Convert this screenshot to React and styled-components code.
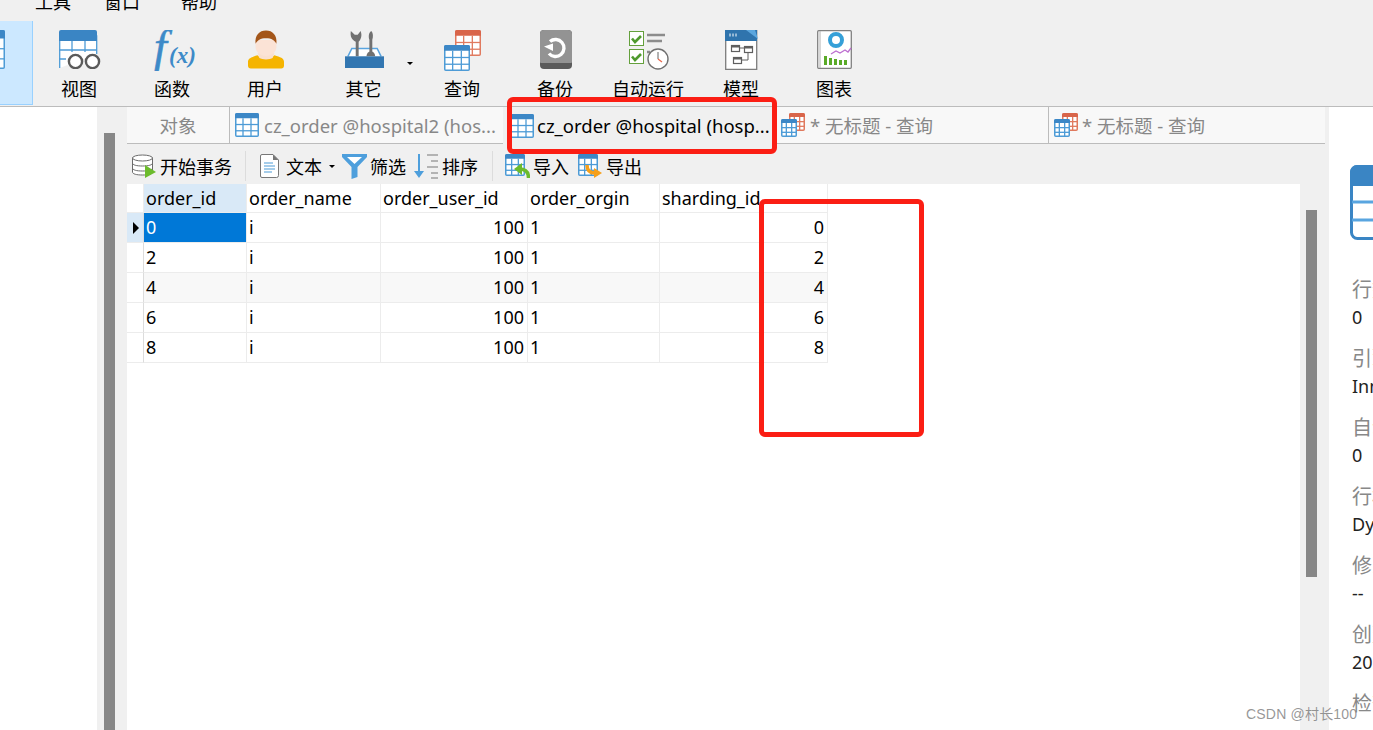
import React from 'react';
import styled, { createGlobalStyle } from 'styled-components';

const Global = createGlobalStyle`
  html, body { margin: 0; padding: 0; background: #fff; height: 730px; overflow: hidden; }
  #root { height: 730px; }
  * { box-sizing: border-box; }
`;
const FONT = `"Noto Sans", "Noto Sans CJK SC", sans-serif`;

const Page = styled.div`
  position: relative; width: 1373px; height: 730px; overflow: hidden;
  display: flex; flex-direction: column; font-family: ${FONT}; font-size: 18px; color: #000;
`;
const Top = styled.header`
  flex: none; height: 107px; background: #f0f0f0; border-bottom: 1px solid #bcbcbc;
  display: flex; flex-direction: column;
`;
const MenuBar = styled.nav`
  height: 21px; flex: none; overflow: hidden; display: flex; align-items: flex-end;
  padding: 0 0 7px 35px; font-size: 18px; line-height: 24px; gap: 33px;
`;
const MenuItem = styled.span`
  flex: none; width: ${p => p.$w}px; white-space: nowrap;
`;
const RibbonRow = styled.div`display: flex; height: 85px;`;
const RibbonBtn = styled.div`
  position: relative; flex: none; width: ${p => p.$w || 93}px; height: 84px;
  display: flex; flex-direction: column; align-items: center; padding-top: 9px;
  overflow: hidden;
  ${p => p.$active && `background: #cce8ff; border-right: 1px solid #99d1ff; border-bottom: 1px solid #99d1ff;`}
`;
const RibbonIcon = styled.div`height: 40px; width: 50px; display: flex; justify-content: center; align-items: flex-start; flex: none;`;
const RibbonText = styled.div`margin-top: 7px; font-size: 18px; line-height: 24px; white-space: nowrap; transform: translateX(-.5px);`;
const DropArrow = styled.span`
  position: absolute; left: ${p => p.$x}px; top: ${p => p.$y}px; width: 0; height: 0;
  border-left: 3px solid transparent; border-right: 3px solid transparent; border-top: 3px solid #000;
`;

const Body = styled.div`flex: 1; display: flex; min-height: 0;`;
const LeftPane = styled.aside`flex: none; width: 97px; background: #fff;`;
const LeftGutter = styled.div`flex: none; width: 30px; background: #f0f0f0; padding: 26px 12px 0 7px;`;
const ScrollThumb = styled.div`
  width: 11px; height: ${p => p.$h}; background: #878787;
`;
const Center = styled.main`flex: none; width: 1202px; display: flex; flex-direction: column; background: #f0f0f0;`;
const Tabs = styled.div`
  flex: none; width: 1198px; height: 37px; display: flex; background: #f8f8f8;
  border-bottom: 1px solid #bcbcbc;
`;
const Tab = styled.div`
  flex: none; width: ${p => p.$w}px; height: ${p => p.$active ? 37 : 36}px; display: flex; align-items: center; gap: ${p => p.$gap ?? 5}px;
  padding: 0 0 0 ${p => p.$pad ?? 5}px; white-space: nowrap; overflow: hidden; font-size: 18.5px;
  color: ${p => p.$active ? '#000' : '#888'};
  background: ${p => p.$active ? '#f0f0f0' : 'transparent'};
  justify-content: ${p => p.$center ? 'center' : 'flex-start'};
  ${p => p.$sep && 'border-left: 1px solid #bcbcbc;'}
`;
const ToolBar = styled.div`
  flex: none; height: 40px; display: flex; align-items: center; padding: 4px 0 0 5px;
  font-size: 18px;
`;
const ToolBtn = styled.div`
  flex: none; display: flex; align-items: center; gap: ${p => p.$gap ?? 3}px; margin-left: ${p => p.$ml || 0}px; white-space: nowrap;
`;
const ToolSep = styled.div`flex: none; width: 1px; height: 30px; background: #dcdcdc; margin-left: ${p => p.$ml}px;`;
const ToolArrow = styled.span`
  width: 0; height: 0;
  border-left: 3px solid transparent; border-right: 3px solid transparent; border-top: 3px solid #000;
`;
const Content = styled.div`flex: 1; display: flex; min-height: 0;`;
const DataArea = styled.section`flex: none; width: 1173px; background: #fff;`;
const DataGrid = styled.div`
  display: grid; width: 701px;
  grid-template-columns: 17px 103px 134px 147px 132px 168px;
  grid-template-rows: 29px;
  grid-auto-rows: 30px;
  font-size: 18px;
`;
const Cell = styled.div`
  padding: 0 3px 2px 2px; display: flex; align-items: center; white-space: nowrap;
  border-right: 1px solid #ececec; border-bottom: 1px solid #ececec; margin: 0;
  justify-content: ${p => p.$right ? 'flex-end' : 'flex-start'};
  background: ${p => p.$sel ? '#0078d7' : p.$head ? '#d9e9f7' : p.$alt ? '#f8f8f8' : '#fff'};
  color: ${p => p.$sel ? '#fff' : '#000'};
`;
const HeadCell = styled(Cell)`padding-bottom: 0;`;
const Marker = styled(Cell)`
  padding: 0 0 0 6px;
  border-right-color: #dcdcdc;
`;
const MarkerArrow = styled.span`
  width: 0; height: 0; border-top: 6px solid transparent; border-bottom: 6px solid transparent; border-left: 6px solid #000;
`;
const RightGutter = styled.div`flex: none; width: 29px; padding: 26px 0 0 6px; background: #f0f0f0;`;
const RightPane = styled.aside`flex: none; width: 44px; background: #fff; overflow: hidden; padding: 58px 0 0 23px;`;
const InfoIcon = styled.div`height: 75px; width: 60px; margin: 0 0 36px -2px;`;
const InfoItem = styled.div`height: 69px; line-height: 28px; white-space: nowrap; font-size: 18px;`;
const InfoLabel = styled.div`color: #888; font-size: 20px; margin-bottom: -1px;`;
const InfoValue = styled.div`color: #222;`;

const RedBox = styled.div`
  position: absolute; left: ${p => p.$x}px; top: ${p => p.$y}px; width: ${p => p.$w}px; height: ${p => p.$h}px;
  border: 5px solid #fb1e14; border-radius: 6px; pointer-events: none;
`;
const Watermark = styled.div`
  position: absolute; left: 1246px; top: 704px; font-size: 14px; line-height: 20px; color: rgba(110,110,110,.72); white-space: nowrap;
  letter-spacing: .2px;
  font-family: "Liberation Sans", "Noto Sans CJK SC", sans-serif;
`;

const TableGrid = ({ x = 0, y = 0, w = 24, h = 24, color = '#3c87c6', line = '#4d9bd6' }) => {
  const hh = h * 0.22;
  const cx = [w / 3, 2 * w / 3], cy = [hh + (h - hh) / 3, hh + 2 * (h - hh) / 3];
  return (
    <g transform={`translate(${x} ${y})`}>
      <rect x=".75" y=".75" width={w - 1.5} height={h - 1.5} rx="1" fill="#fff" stroke={line} strokeWidth="1.5" />
      <path d={`M0 ${hh}V2a2 2 0 0 1 2-2H${w - 2}a2 2 0 0 1 2 2V${hh}Z`} fill={color} />
      {cx.map(v => <line key={v} x1={v} x2={v} y1={hh} y2={h} stroke={line} strokeWidth="1.3" />)}
      {cy.map(v => <line key={v} y1={v} y2={v} x1="0" x2={w} stroke={line} strokeWidth="1.3" />)}
    </g>
  );
};
const TabTableIcon = () => (
  <svg width="24" height="24" viewBox="0 0 24 24" style={{ flex: 'none' }}><TableGrid /></svg>
);
const TabQueryIcon = () => (
  <svg width="24" height="24" viewBox="0 0 24 24" style={{ flex: 'none' }}>
    <TableGrid x={8} y={0} w={16} h={18} color="#d9654a" line="#e07a5f" />
    <TableGrid x={0} y={6} w={16} h={18} />
  </svg>
);
const ViewIcon = () => (
  <svg width="42" height="39" viewBox="0 0 42 39">
    <path d="M.7 38V6h37v18" fill="#fff" stroke="#4d9bd6" strokeWidth="1.3" />
    <path d="M0 11V2a2 2 0 0 1 2-2h34a2 2 0 0 1 2 2v9Z" fill="#3a85c4" />
    <path d="M13 11v11M26 11v11M0 20h38M0 29h7" stroke="#4d9bd6" strokeWidth="1.3" fill="none" />
    <circle cx="16.500" cy="31.500" r="6.600" fill="#fff" stroke="#5a5a5a" strokeWidth="2.400" />
    <circle cx="33.500" cy="31.500" r="6.600" fill="#fff" stroke="#5a5a5a" strokeWidth="2.400" />
  </svg>
);
const FunctionIcon = () => (
  <svg width="46" height="41" viewBox="0 0 46 41">
    <text x="4" y="32" fontFamily="Liberation Serif" fontStyle="italic" fontSize="46" fill="#3d8ac8" stroke="#3d8ac8" strokeWidth=".6">f</text>
    <text x="19" y="33" fontFamily="Liberation Serif" fontStyle="italic" fontWeight="700" fontSize="23" fill="#3d8ac8">(x)</text>
  </svg>
);
const UserIcon = () => (
  <svg width="36" height="39" viewBox="0 0 38 40">
    <path d="M0 33c0-4 4-5 10-7 2 3 15 3 18 0 6 2 10 3 10 7v4a3 3 0 0 1-3 3H3a3 3 0 0 1-3-3Z" fill="#f5b400" />
    <path d="M10 24h18l-2 5c-3 2-11 2-14 0Z" fill="#f9e0d0" />
    <path d="M8 10h22v8c0 5-6 9-11 9S8 23 8 18Z" fill="#fbe3d6" />
    <path d="M8 14C7 5 12 0 19 0s12 5 11 14c-2-4-5-6-11-6s-9 2-11 6Z" fill="#a3561a" />
  </svg>
);
const OtherIcon = () => (
  <svg width="39" height="38" viewBox="0 0 40 39">
    <path d="M3 27 7 19h26l4 8" fill="#fff" stroke="#5aa5e0" strokeWidth="1.600" />
    <path d="M11 27V12C7 10 5 7 6 1l4 4h3l3-4c2 5 0 9-2 11v15Z" fill="#717171" />
    <path d="M27 1c2 2 2 6 1 9v13h-3V10c-1-3-1-7 2-9Z" fill="#717171" />
    <path d="M22 27c0-3 2-5 4.500-5s4.500 2 4.500 5Z" fill="#717171" />
    <rect x="0" y="27" width="40" height="12" fill="#3276b1" />
  </svg>
);
const QueryIcon = () => (
  <svg width="38" height="41" viewBox="0 0 38 41">
    <TableGrid x={11} y={0} w={26} h={26} color="#d9654a" line="#e07a5f" />
    <TableGrid x={0} y={15} w={26} h={26} />
  </svg>
);
const BackupIcon = () => (
  <svg width="32" height="39" viewBox="0 0 32 39">
    <rect width="32" height="39" rx="4" fill="#5b5b5b" />
    <path d="M0 4a4 4 0 0 1 4-4h24a4 4 0 0 1 4 4v28a1 1 0 0 1-1 1H1a1 1 0 0 1-1-1Z" fill="#939393" />
    <path d="M10 11.500a8.500 8.500 0 1 1-1 12" fill="none" stroke="#fff" strokeWidth="3.400" />
    <path d="M4 16.500l9-3v7.500Z" fill="#fff" />
  </svg>
);
const Check = ({ y }) => (
  <g transform={`translate(0 ${y})`}>
    <rect x=".5" y=".5" width="14" height="14" fill="#fff" stroke="#64a03c" />
    <path d="M3 7.500 6 11l6-6" fill="none" stroke="#4f9a2e" strokeWidth="2.600" />
  </g>
);
const AutoIcon = () => (
  <svg width="40" height="40" viewBox="0 0 40 40">
    <Check y={1} /><Check y={19} />
    <path d="M18 5h18M18 11h15M18 22h3" stroke="#8c8c8c" strokeWidth="2.600" />
    <circle cx="29" cy="29" r="10" fill="#fff" stroke="#707070" strokeWidth="1.400" />
    <path d="M29 22v7" stroke="#666" strokeWidth="1" /><path d="M29 29l4 3" stroke="#e8664a" strokeWidth="1.200" />
  </svg>
);
const ModelIcon = () => (
  <svg width="33" height="40" viewBox="0 0 33 40">
    <path d="M.7.7h31v38.600H.7Z" fill="#fff" stroke="#7d7d7d" strokeWidth="1.300" />
    <rect width="32" height="11" fill="#2f74ad" />
    <path d="M21 0h9l3 9Z" fill="#5ba6de" />
    <path d="M5 3.500v3M8 3.500v3M11 3.500v3" stroke="#fff" />
    <g fill="#fff" stroke="#5f5f5f" strokeWidth="1.200">
      <rect x="6.500" y="15.500" width="8" height="6" /><rect x="19.500" y="16.500" width="8" height="6" /><rect x="8.500" y="27.500" width="8" height="6" />
    </g>
    <path d="M14.500 18h5M23 23v7h-6.500" fill="none" stroke="#5f5f5f" />
    <path d="M6.500 15.500h8v2h-8ZM19.500 16.500h8v2h-8ZM8.500 27.500h8v2h-8Z" fill="#5f5f5f" />
  </svg>
);
const ChartIcon = () => (
  <svg width="35" height="39" viewBox="0 0 35 39">
    <rect x=".7" y=".7" width="33.600" height="37.600" rx="1" fill="#fff" stroke="#808080" strokeWidth="1.300" />
    <path d="M3 1v37" stroke="#b0b0b0" strokeWidth="1" />
    <circle cx="19" cy="10" r="6" fill="none" stroke="#35a0d8" strokeWidth="4" />
    <path d="M14 24l5-3 4 2 5-3 3 2 3-4" fill="none" stroke="#bd6fd0" strokeWidth="1.300" />
    <path d="M7 26h3v9H7ZM12 28h3v7h-3ZM17 29h3v6h-3ZM22 30h3v5h-3ZM27 30h3v5h-3Z" fill="#5aaa28" />
  </svg>
);
const DbIcon = () => (
  <svg width="24" height="24" viewBox="0 0 24 24" style={{ flex: 'none' }}>
    <g fill="#fff" stroke="#6b6b6b" strokeWidth="1">
      <path d="M.5 4v14c0 2 4 3 10 3s10-1 10-3V4Z" />
      <ellipse cx="10.500" cy="4" rx="10" ry="3" />
      <path d="M.5 9c0 2 4 3 10 3s10-1 10-3M.5 14c0 2 4 3 10 3s10-1 10-3" fill="none" />
    </g>
    <path d="M13 11l11 7-11 6Z" fill="#6cbb2c" />
  </svg>
);
const DocIcon = () => (
  <svg width="19" height="24" viewBox="0 0 19 24" style={{ flex: 'none' }}>
    <path d="M2 .5h11l5.500 5.500v15.500a2 2 0 0 1-2 2H2a1.500 1.500 0 0 1-1.500-1.500V2A1.500 1.500 0 0 1 2 .5Z" fill="#fff" stroke="#777" />
    <path d="M13 .5V6h5.500Z" fill="#777" />
    <path d="M4 9h9M4 12h11M4 15h11M4 18h8" stroke="#4d9bd6" />
  </svg>
);
const FilterIcon = () => (
  <svg width="25" height="25" viewBox="0 0 25 25" style={{ flex: 'none' }}>
    <path d="M0 0h25v3L15.500 13v10L9.500 25V13L0 3Z" fill="#4e9fdc" />
    <path d="M5 3h15l-7.500 7Z" fill="#fff" />
  </svg>
);
const SortIcon = () => (
  <svg width="25" height="25" viewBox="0 0 25 25" style={{ flex: 'none' }}>
    <path d="M5 0v19" stroke="#4e9fdc" strokeWidth="2" />
    <path d="M0 17h10l-5 7Z" fill="#4e9fdc" />
    <path d="M13 1h11M17 7h7M13 13h11M17 19h7M17 24h7" stroke="#777" strokeWidth="1" />
  </svg>
);
const ImportIcon = () => (
  <svg width="25" height="24" viewBox="0 0 25 24" style={{ flex: 'none' }}>
    <TableGrid w={20} h={22} />
    <path d="M23.500 24c0-6-3-9-9-9" fill="none" stroke="#6cbb2c" strokeWidth="3.500" />
    <path d="M17 9v12l-8-6Z" fill="#6cbb2c" />
  </svg>
);
const ExportIcon = () => (
  <svg width="25" height="24" viewBox="0 0 25 24" style={{ flex: 'none' }}>
    <TableGrid w={20} h={22} />
    <path d="M9 11c0 6 3 8 8 8" fill="none" stroke="#f6a01a" strokeWidth="3.500" />
    <path d="M16 14l8 5-8 5Z" fill="#f6a01a" />
  </svg>
);
const BigTableIcon = () => (
  <svg width="60" height="75" viewBox="0 0 60 75">
    <rect x="1.500" y="1.500" width="70" height="72" rx="6" fill="#fff" stroke="#3a85c4" strokeWidth="3" />
    <path d="M0 21V7a7 7 0 0 1 7-7h60v21Z" fill="#3a85c4" />
    <path d="M2 37h60M2 55h60" stroke="#59a5e0" strokeWidth="3" />
  </svg>
);

const ribbon = [
  { t: '视图', I: ViewIcon },
  { t: '函数', I: FunctionIcon },
  { t: '用户', I: UserIcon },
  { t: '其它', I: OtherIcon, w: 104, arrow: true },
  { t: '查询', I: QueryIcon },
  { t: '备份', I: BackupIcon },
  { t: '自动运行', I: AutoIcon },
  { t: '模型', I: ModelIcon },
  { t: '图表', I: ChartIcon },
];
const rows = [0, 2, 4, 6, 8];
const info = [['行数', '0'], ['引擎', 'InnoDB'], ['自动递增', '0'], ['行格式', 'Dynamic'], ['修改日期', '--'], ['创建日期', '2021-06-01'], ['检查时间', '']];

export default function App() {
  return (
    <Page>
      <Global />
      <Top>
        <MenuBar>
          <MenuItem $w={36}>工具</MenuItem>
          <MenuItem $w={44}>窗口</MenuItem>
          <MenuItem $w={36}>帮助</MenuItem>
        </MenuBar>
        <RibbonRow>
          <RibbonBtn $w={33} $active>
            <svg width="33" height="40" viewBox="0 0 33 40"><TableGrid x={-26} y={0} w={31} h={39} /></svg>
          </RibbonBtn>
          {ribbon.map(({ t, I, w, arrow }) => (
            <RibbonBtn key={t} $w={w}>
              <RibbonIcon><I /></RibbonIcon>
              <RibbonText>{t}</RibbonText>
              {arrow && <DropArrow $x={95} $y={41} />}
            </RibbonBtn>
          ))}
        </RibbonRow>
      </Top>
      <Body>
        <LeftPane />
        <LeftGutter><ScrollThumb $h="600px" /></LeftGutter>
        <Center>
          <Tabs>
            <Tab $w={102} $center $pad={0}>对象</Tab>
            <Tab $w={274} $sep>
              <TabTableIcon /><span>cz_order @hospital2 (hos...</span>
            </Tab>
            <Tab $w={273} $active $pad={7} $gap={3}>
              <TabTableIcon /><span>cz_order @hospital (hosp...</span>
            </Tab>
            <Tab $w={272} $pad={5}>
              <TabQueryIcon /><span>* 无标题 - 查询</span>
            </Tab>
            <Tab $w={277} $sep $gap={4}>
              <TabQueryIcon /><span>* 无标题 - 查询</span>
            </Tab>
          </Tabs>
          <ToolBar>
            <ToolBtn $gap={4}><DbIcon />开始事务</ToolBtn>
            <ToolSep $ml={13} />
            <ToolBtn $ml={14} $gap={7}><DocIcon />文本<ToolArrow /></ToolBtn>
            <ToolBtn $ml={7}><FilterIcon />筛选</ToolBtn>
            <ToolBtn $ml={8}><SortIcon />排序</ToolBtn>
            <ToolSep $ml={14} />
            <ToolBtn $ml={12}><ImportIcon />导入</ToolBtn>
            <ToolBtn $ml={9}><ExportIcon />导出</ToolBtn>
          </ToolBar>
          <Content>
            <DataArea>
              <DataGrid>
                <HeadCell />
                <HeadCell $head>order_id</HeadCell>
                <HeadCell>order_name</HeadCell>
                <HeadCell>order_user_id</HeadCell>
                <HeadCell>order_orgin</HeadCell>
                <HeadCell>sharding_id</HeadCell>
                {rows.map((r, i) => (
                  <React.Fragment key={r}>
                    <Marker $head={i === 0}>{i === 0 && <MarkerArrow />}</Marker>
                    <Cell $sel={i === 0} $alt={i === 2}>{r}</Cell>
                    <Cell $alt={i === 2}>i</Cell>
                    <Cell $alt={i === 2} $right>100</Cell>
                    <Cell $alt={i === 2}>1</Cell>
                    <Cell $alt={i === 2} $right>{r}</Cell>
                  </React.Fragment>
                ))}
              </DataGrid>
            </DataArea>
            <RightGutter><ScrollThumb $h="367px" /></RightGutter>
          </Content>
        </Center>
        <RightPane>
          <InfoIcon><BigTableIcon /></InfoIcon>
          {info.map(([l, v]) => (
            <InfoItem key={l}>
              <InfoLabel>{l}</InfoLabel>
              <InfoValue>{v}</InfoValue>
            </InfoItem>
          ))}
        </RightPane>
      </Body>
      <RedBox $x={507} $y={97} $w={270} $h={57} />
      <RedBox $x={759} $y={199} $w={165} $h={238} />
      <Watermark>CSDN @村长100</Watermark>
    </Page>
  );
}
